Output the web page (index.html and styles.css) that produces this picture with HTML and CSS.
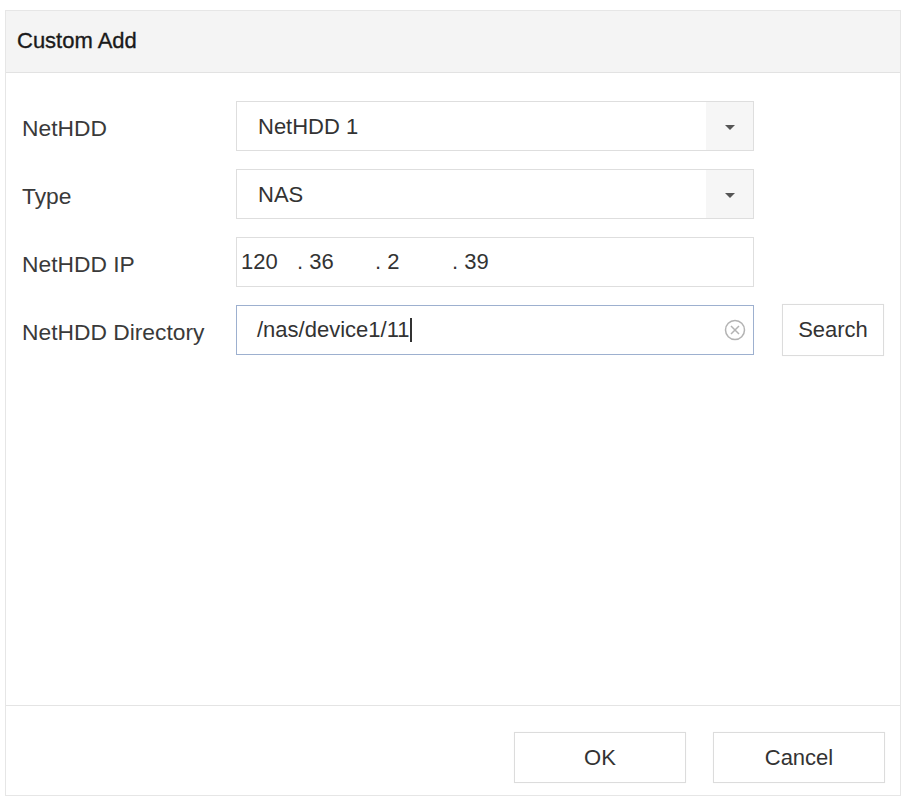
FILE: index.html
```html
<!DOCTYPE html>
<html>
<head>
<meta charset="utf-8">
<link rel="stylesheet" href="styles.css">
</head>
<body>
<div class="dialog">
  <div class="dialog-header">Custom Add</div>
  <div class="dialog-body">
    <div class="form">
      <div class="row">
        <div class="label">NetHDD</div>
        <div class="select">
          <span class="select-value">NetHDD 1</span>
          <span class="select-arrow"><span class="caret"></span></span>
        </div>
      </div>
      <div class="row">
        <div class="label">Type</div>
        <div class="select">
          <span class="select-value">NAS</span>
          <span class="select-arrow"><span class="caret"></span></span>
        </div>
      </div>
      <div class="row">
        <div class="label">NetHDD IP</div>
        <div class="ip-input">
          <span class="oct o1">120</span>
          <span class="oct o2">. 36</span>
          <span class="oct o3">. 2</span>
          <span class="oct o4">. 39</span>
        </div>
      </div>
      <div class="row">
        <div class="label">NetHDD Directory</div>
        <div class="text-input focused">
          <span class="input-value">/nas/device1/11<span class="cursor"></span></span>
          <svg class="clear-icon" width="22" height="22" viewBox="0 0 22 22">
            <circle cx="11" cy="11" r="9.5" fill="none" stroke="#b3b3b3" stroke-width="1.5"/>
            <path d="M7 7 L15 15 M15 7 L7 15" stroke="#b3b3b3" stroke-width="1.5" fill="none"/>
          </svg>
        </div>
        <button class="btn search-btn">Search</button>
      </div>
    </div>
  </div>
  <div class="dialog-footer">
    <button class="btn footer-btn">OK</button>
    <button class="btn footer-btn">Cancel</button>
  </div>
</div>
</body>
</html>
```

FILE: styles.css
```css
html, body {
  margin: 0;
  padding: 0;
  background: #ffffff;
}
body {
  font-family: "Liberation Sans", Arial, sans-serif;
  color: #333333;
  padding: 10px 0 0 5px;
  box-sizing: border-box;
  height: 796px;
  overflow: hidden;
}
.dialog {
  width: 896px;
  height: 786px;
  border: 1px solid #e6e6e6;
  display: flex;
  flex-direction: column;
  background: #fff;
  box-sizing: border-box;
}
.dialog-header {
  height: 62px;
  flex: none;
  background: #f4f4f4;
  border-bottom: 1px solid #e2e2e2;
  display: flex;
  align-items: center;
  padding-left: 11px;
  font-size: 22px;
  color: #1a1a1a;
  -webkit-text-stroke: 0.35px #1a1a1a;
  padding-bottom: 1px;
  box-sizing: border-box;
}
.dialog-body {
  flex: 1;
  padding: 28px 0 0 16px;
}
.form {
  display: flex;
  flex-direction: column;
  gap: 18px;
}
.row {
  display: flex;
  align-items: center;
  height: 50px;
}
.label {
  width: 214px;
  flex: none;
  font-size: 22.8px;
  color: #3a3a3a;
  padding-top: 4px;
}
.select, .ip-input, .text-input {
  width: 518px;
  height: 50px;
  box-sizing: border-box;
  border: 1px solid #dedede;
  display: flex;
  align-items: center;
  font-size: 22px;
  color: #333;
  background: #fff;
}
.select-value {
  flex: 1;
  padding-left: 21px;
  padding-top: 1px;
}
.select-arrow {
  width: 47px;
  align-self: stretch;
  background: #f6f6f6;
  display: flex;
  align-items: center;
  justify-content: center;
}
.caret {
  width: 0;
  height: 0;
  border-left: 5px solid transparent;
  border-right: 5px solid transparent;
  border-top: 5px solid #555;
  margin-top: 2px;
}
.ip-input {
  padding-left: 4px;
}
.oct { display: inline-block; }
.o1 { width: 56px; }
.o2 { width: 78px; }
.o3 { width: 77px; }
.o4 { width: 60px; }
.text-input.focused {
  border: 1.5px solid #9db0cf;
}
.input-value {
  flex: 1;
  padding-left: 20px;
  display: flex;
  align-items: center;
}
.cursor {
  display: inline-block;
  width: 1.5px;
  height: 24px;
  background: #333;
  margin-left: 1px;
}
.clear-icon {
  margin-right: 7px;
  flex: none;
}
.btn {
  font-family: "Liberation Sans", Arial, sans-serif;
  font-size: 22px;
  color: #333;
  background: #fff;
  border: 1px solid #dcdcdc;
  box-shadow: 0 0 1px rgba(0,0,0,0.06);
  padding: 0;
  box-sizing: border-box;
}
.search-btn {
  margin-left: 28px;
  width: 102px;
  height: 52px;
}
.dialog-footer {
  flex: none;
  height: 90px;
  border-top: 1px solid #e4e4e4;
  display: flex;
  justify-content: flex-end;
  align-items: flex-start;
  padding: 26px 15px 0 0;
  gap: 27px;
  box-sizing: border-box;
}
.footer-btn {
  width: 172px;
  height: 51px;
}
```
